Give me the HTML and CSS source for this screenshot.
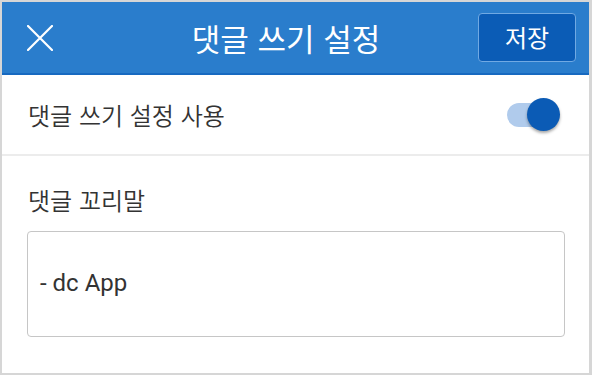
FILE: index.html
```html
<!DOCTYPE html>
<html lang="ko">
<head>
<meta charset="utf-8">
<link rel="stylesheet" href="styles.css">
</head>
<body>
<div class="frame">
  <header class="header">
    <button class="close" aria-label="닫기">
      <svg width="26" height="26" viewBox="0 0 26 26"><path d="M1 1 L25 25 M25 1 L1 25" stroke="#fff" stroke-width="2.2" stroke-linecap="round" fill="none"/></svg>
    </button>
    <h1 class="title">댓글 쓰기 설정</h1>
    <button class="save">저장</button>
  </header>
  <div class="row">
    <span class="row-label">댓글 쓰기 설정 사용</span>
    <span class="switch"><span class="track"></span><span class="knob"></span></span>
  </div>
  <div class="section">
    <div class="section-label">댓글 꼬리말</div>
    <div class="field">- dc App</div>
  </div>
</div>
</body>
</html>
```
FILE: styles.css
```css
html, body {
  margin: 0;
  padding: 0;
  background: #fff;
}
.frame {
  width: 592px;
  height: 375px;
  box-sizing: border-box;
  border: 2px solid #d6d6d6;
  border-right-width: 3px;
  background: #fff;
  font-family: Roboto, "Noto Sans CJK KR", sans-serif;
  color: #333;
  display: flex;
  flex-direction: column;
}
.header {
  height: 71px;
  flex: none;
  background: #2a7dcc;
  border-bottom: 2px solid #1769c0;
  display: flex;
  align-items: center;
  padding-right: 13px;
}
.close {
  width: 80px;
  height: 71px;
  flex: none;
  border: 0;
  background: transparent;
  padding: 0 0 0 25px;
  display: flex;
  align-items: center;
  cursor: pointer;
}
.title {
  flex: 1;
  margin: 0;
  text-align: center;
  color: #fff;
  font-family: "Noto Sans CJK KR", sans-serif;
  font-size: 31px;
  font-weight: 400;
  line-height: 1;
  padding-left: 12px;
}
.save {
  width: 98px;
  height: 49px;
  flex: none;
  box-sizing: border-box;
  background: #0b5cb6;
  border: 1px solid #70a9e3;
  border-radius: 4px;
  color: #fff;
  font-family: "Noto Sans CJK KR", sans-serif;
  font-size: 24px;
  font-weight: 400;
  padding: 0 0 2px;
  cursor: pointer;
}
.row {
  height: 81px;
  flex: none;
  box-sizing: border-box;
  border-bottom: 2px solid #ececec;
  display: flex;
  align-items: center;
  justify-content: space-between;
  padding: 0 29px 0 26px;
}
.row-label {
  font-family: "Noto Sans CJK KR", sans-serif;
  font-size: 24px;
  font-weight: 350;
  color: #333;
}
.switch {
  position: relative;
  width: 53px;
  height: 34px;
  display: block;
}
.track {
  position: absolute;
  left: 0;
  top: 5px;
  width: 38px;
  height: 24px;
  border-radius: 12px;
  background: #b0cbec;
}
.knob {
  position: absolute;
  right: 0;
  top: 0;
  width: 33px;
  height: 33px;
  border-radius: 50%;
  background: #0b5bb5;
  box-shadow: 0 2px 3px rgba(0, 0, 0, 0.35);
}
.section {
  padding: 29px 24px 0 25px;
}
.section-label {
  font-family: "Noto Sans CJK KR", sans-serif;
  font-size: 24px;
  font-weight: 350;
  line-height: 30px;
  padding-left: 1px;
  margin-bottom: 16px;
}
.field {
  height: 106px;
  box-sizing: border-box;
  border: 1.5px solid #c6c6c6;
  border-radius: 4px;
  display: flex;
  align-items: center;
  padding: 0 0 2px 12px;
  font-family: Roboto, sans-serif;
  font-size: 24px;
  color: #333;
}
```
